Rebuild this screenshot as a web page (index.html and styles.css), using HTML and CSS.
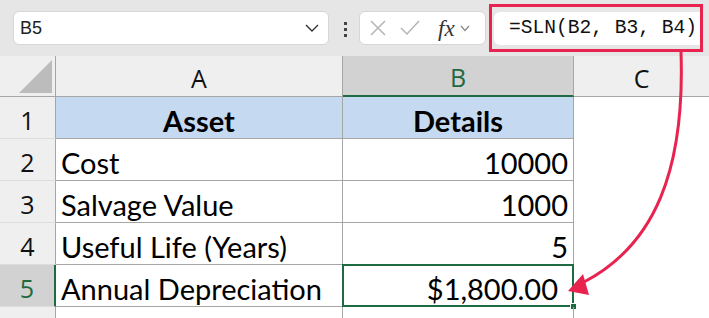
FILE: index.html
```html
<!DOCTYPE html>
<html lang="en">
<head>
    <meta charset="UTF-8">
    <meta name="viewport" content="width=device-width, initial-scale=1.0">
    <title>SLN Depreciation</title>
    <link rel="stylesheet" href="styles.css">
</head>
<body>
    <div class="toolbar">
        <div class="namebox">
            <span>B5</span>
            <svg class="chev" width="14" height="8" viewBox="0 0 14 8"><path d="M1 1 L7 7 L13 1" fill="none" stroke="#333" stroke-width="1.4"/></svg>
        </div>
        <div class="dots">
            <span></span><span></span><span></span>
        </div>
        <div class="fbtns">
            <svg width="18" height="18" viewBox="0 0 18 18"><path d="M2 2 L16 16 M16 2 L2 16" stroke="#b4b4b4" stroke-width="1.5"/></svg>
            <svg width="20" height="18" viewBox="0 0 20 18"><path d="M1 9 L7 15 L19 2" fill="none" stroke="#b4b4b4" stroke-width="1.5"/></svg>
            <span class="fx">fx</span>
            <svg width="10" height="7" viewBox="0 0 10 7"><path d="M1 1 L5 5.5 L9 1" fill="none" stroke="#888" stroke-width="1.2"/></svg>
        </div>
        <div class="highlight">
            <div class="finput">=SLN(B2, B3, B4)</div>
        </div>
    </div>

    <div class="sheet">
        <div class="corner"><span class="tri"></span></div>
        <div class="colhead">A</div>
        <div class="colhead active">B</div>
        <div class="colhead last">C</div>

        <div class="rowhead">1</div>
        <div class="cell head">Asset</div>
        <div class="cell head">Details</div>
        <div class="blank"></div>

        <div class="rowhead">2</div>
        <div class="cell">Cost</div>
        <div class="cell num">10000</div>
        <div class="blank"></div>

        <div class="rowhead">3</div>
        <div class="cell">Salvage Value</div>
        <div class="cell num">1000</div>
        <div class="blank"></div>

        <div class="rowhead">4</div>
        <div class="cell">Useful Life (Years)</div>
        <div class="cell num">5</div>
        <div class="blank"></div>

        <div class="rowhead active">5</div>
        <div class="cell">Annual Depreciation</div>
        <div class="cell num selected">$1,800.00<span class="handle"></span></div>
        <div class="blank"></div>

        <div class="rowhead"></div>
        <div class="cell"></div>
        <div class="cell"></div>
        <div class="blank"></div>
    </div>

    <svg class="arrow" width="709" height="318" viewBox="0 0 709 318">
        <path d="M681 52 C 685 170 655 245 584 282" fill="none" stroke="#e8234f" stroke-width="3"/>
        <polygon points="568,291 583,274 589,295" fill="#e8234f"/>
    </svg>
</body>
</html>
```

FILE: styles.css
```css
* {
    box-sizing: border-box;
}

body {
    margin: 0;
    width: 709px;
    height: 318px;
    overflow: hidden;
    background-color: #fff;
    font-family: "Open Sans", sans-serif;
    position: relative;
}

.toolbar {
    height: 56px;
    background-color: #e6e6e6;
    display: flex;
    align-items: flex-start;
    padding: 4px 0 0 13px;
}

.namebox {
    margin-top: 7px;
    width: 316px;
    height: 34px;
    background-color: #fff;
    border: 1px solid #d6d6d6;
    border-radius: 6px;
    display: flex;
    align-items: center;
    justify-content: space-between;
    padding: 0 9px 0 6px;
    font-family: "Liberation Sans", sans-serif;
    font-size: 18px;
    color: #222;
}

.dots {
    margin: 18px 0 0 12px;
    width: 8px;
    display: flex;
    flex-direction: column;
    gap: 3px;
    align-items: center;
}

.dots span {
    width: 3px;
    height: 3px;
    background-color: #444;
}

.fbtns {
    margin: 7px 0 0 10px;
    width: 127px;
    height: 34px;
    background-color: #fff;
    border: 1px solid #d6d6d6;
    border-radius: 6px;
    display: flex;
    align-items: center;
    padding: 0 0 0 9px;
    gap: 13px;
}

.fbtns .fx {
    font-family: "Liberation Serif", serif;
    font-style: italic;
    font-size: 23px;
    color: #333;
    margin-left: 5px;
    margin-right: -8px;
    line-height: 1;
}

.highlight {
    margin-left: 3px;
    width: 214px;
    height: 48px;
    border: 3px solid #e8234f;
    padding: 5px 0 0 2px;
}

.finput {
    height: 33px;
    background-color: #fff;
    border-radius: 6px 0 0 6px;
    font-family: "Liberation Mono", monospace;
    font-size: 19.6px;
    color: #111;
    padding: 5px 0 0 15px;
    white-space: nowrap;
}

.sheet {
    display: grid;
    grid-template-columns: 56px 287px 231px 135px;
    grid-template-rows: 41px repeat(5, 42px) 20px;
}

.corner {
    background-color: #efefef;
    border-right: 1px solid #a6a6a6;
    border-bottom: 1px solid #a6a6a6;
    position: relative;
}

.tri {
    position: absolute;
    right: 3px;
    bottom: 3px;
    width: 0;
    height: 0;
    border-left: 33px solid transparent;
    border-bottom: 33px solid #bcbcbc;
}

.colhead {
    background-color: #efefef;
    border-right: 1px solid #a6a6a6;
    border-bottom: 1px solid #a6a6a6;
    display: flex;
    align-items: center;
    justify-content: center;
    font-size: 25px;
    color: #111;
    padding-top: 3px;
}

.colhead.active {
    background-color: #d2d2d2;
    color: #1e6b41;
    border-bottom: 2px solid #1e6b41;
}

.colhead.last {
    border-right: none;
}

.rowhead {
    background-color: #efefef;
    border-right: 1px solid #a6a6a6;
    border-bottom: 1px solid #dcdcdc;
    display: flex;
    align-items: center;
    justify-content: center;
    font-size: 25px;
    color: #111;
    padding-top: 4px;
}

.rowhead.active {
    background-color: #d2d2d2;
    color: #1e6b41;
    border-right: 2px solid #1e6b41;
}

.cell {
    border-right: 1px solid #a6a6a6;
    border-bottom: 1px solid #a6a6a6;
    display: flex;
    align-items: center;
    padding: 5px 5px 0 5px;
    font-family: "Lato", sans-serif;
    font-size: 29px;
    color: #000;
    white-space: nowrap;
    position: relative;
}

.cell.head {
    background-color: #c5d9f1;
    font-weight: bold;
    justify-content: center;
}

.cell.num {
    justify-content: flex-end;
}

.cell.selected {
    border: 2px solid #1e6b41;
    margin: -1px 0 0 -1px;
    padding-right: 14px;
}

.handle {
    position: absolute;
    right: -5px;
    bottom: -5px;
    width: 7px;
    height: 7px;
    background-color: #1e6b41;
    border: 1px solid #fff;
}

.blank {
    background-color: #fff;
}

.arrow {
    position: absolute;
    top: 0;
    left: 0;
    pointer-events: none;
}
```
